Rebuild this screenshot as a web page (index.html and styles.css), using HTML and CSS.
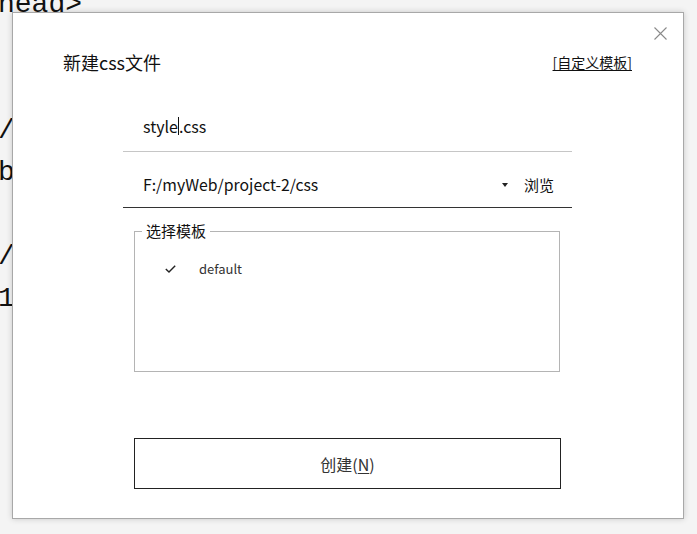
FILE: index.html
```html
<!DOCTYPE html>
<html lang="zh-CN">
<head>
    <meta charset="UTF-8">
    <meta name="viewport" content="width=device-width, initial-scale=1.0">
    <title>新建css文件</title>
    <link rel="stylesheet" href="styles.css">
</head>
<body>
    <pre class="editor">head&gt;


/
b

/
1
</pre>

    <div class="dialog">
        <button class="close-button" aria-label="关闭">
            <svg width="13" height="13" viewBox="0 0 13 13">
                <path d="M0.5 0.5 L12.5 12.5 M12.5 0.5 L0.5 12.5" stroke="#8a8a8a" stroke-width="1.1" fill="none"/>
            </svg>
        </button>

        <div class="dialog-header">
            <h1>新建css文件</h1>
            <a class="template-link" href="#">[自定义模板]</a>
        </div>

        <div class="form">
            <div class="field field-name">
                <span>style</span><span class="caret"></span><span>.css</span>
            </div>
            <div class="field field-path">
                <span class="path-text">F:/myWeb/project-2/css</span>
                <span class="dropdown-arrow"></span>
                <span class="browse">浏览</span>
            </div>

            <fieldset class="templates">
                <legend>选择模板</legend>
                <ul class="template-list">
                    <li class="template-item">
                        <svg class="check" width="11" height="8" viewBox="0 0 11 8">
                            <path d="M0.8 4 L4 7 L10.2 0.8" stroke="#222" stroke-width="1.4" fill="none"/>
                        </svg>
                        <span>default</span>
                    </li>
                </ul>
            </fieldset>

            <button class="create-button">创建(<u>N</u>)</button>
        </div>
    </div>
</body>
</html>
```

FILE: styles.css
```css
* {
    margin: 0;
    padding: 0;
    box-sizing: border-box;
}

body {
    width: 697px;
    height: 534px;
    overflow: hidden;
    background: #f4f4f4;
    font-family: "Noto Sans CJK SC", "Noto Sans", sans-serif;
    color: #111;
}

.editor {
    margin: -16px 0 0 -2px;
    font-family: "Liberation Mono", monospace;
    font-size: 28px;
    line-height: 42px;
    color: #111;
}

.dialog {
    position: absolute;
    left: 12px;
    top: 12px;
    width: 672px;
    height: 507px;
    background: #fff;
    border: 1px solid #a8a8a8;
    box-shadow: 0 0 6px rgba(0, 0, 0, 0.18);
    padding: 38px 0 0;
}

.close-button {
    position: absolute;
    top: 14px;
    right: 16px;
    width: 13px;
    height: 13px;
    border: none;
    background: none;
    display: flex;
}

.dialog-header {
    display: flex;
    align-items: center;
    justify-content: space-between;
    padding: 0 51px 0 50px;
    height: 22px;
}

.dialog-header h1 {
    font-size: 18px;
    font-weight: 400;
    line-height: 22px;
}

.template-link {
    font-size: 14px;
    color: #111;
    text-decoration: underline;
    text-underline-offset: 2px;
}

.form {
    width: 449px;
    margin-left: 110px;
}

.field {
    display: flex;
    align-items: center;
    padding-left: 20px;
    font-size: 16px;
    line-height: 20px;
}

.field-name {
    margin-top: 43px;
    padding-bottom: 15px;
    border-bottom: 1px solid #c6c6c6;
}

.caret {
    width: 1px;
    height: 18px;
    background: #111;
}

.field-path {
    padding-top: 23px;
    padding-bottom: 12px;
    border-bottom: 1px solid #333;
    font-size: 15.8px;
}

.path-text {
    flex: 1;
}

.dropdown-arrow {
    width: 0;
    height: 0;
    border-left: 3px solid transparent;
    border-right: 3px solid transparent;
    border-top: 4px solid #222;
    margin-right: 16px;
}

.browse {
    font-size: 15px;
    margin-right: 18px;
}

.templates {
    margin: 15px 12px 0 11px;
    height: 149px;
    border: 1px solid #b4b4b4;
    padding: 0;
}

.templates legend {
    margin-left: 7px;
    padding: 0 4px;
    font-size: 15px;
    line-height: 16px;
}

.template-list {
    list-style: none;
    padding: 21px 0 0 30px;
}

.template-item {
    display: flex;
    align-items: center;
    gap: 23px;
    font-size: 13px;
    line-height: 18px;
    color: #333;
}

.create-button {
    display: block;
    width: 427px;
    height: 51px;
    margin: 66px 0 0 11px;
    background: #fff;
    border: 1px solid #222;
    font-family: inherit;
    font-size: 16px;
    color: #333;
}

.create-button u {
    text-underline-offset: 2px;
}
```
